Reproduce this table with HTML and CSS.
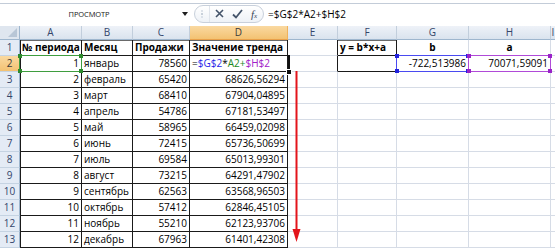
FILE: index.html
```html
<!DOCTYPE html>
<html lang="ru">
<head>
<meta charset="utf-8">
<link rel="stylesheet" href="styles.css">
</head>
<body>
<div class="excel">
  <div class="fbar">
    <div class="namebox"><span class="nb-text">ПРОСМОТР</span><span class="nb-arrow"></span></div>
    <div class="fbtns">
      <span class="fb-grip"><svg width="10" height="12" viewBox="0 0 10 12"><circle cx="5" cy="6" r="1" fill="#b9c3cf"/><circle cx="5" cy="3" r="1" fill="#d3dae3"/><circle cx="5" cy="9" r="1" fill="#d3dae3"/></svg></span>
      <span class="fb-ico"><svg width="9" height="9" viewBox="0 0 9 9"><path d="M1 1 L8 8 M8 1 L1 8" stroke="#44546a" stroke-width="1.6" fill="none"/></svg></span>
      <span class="fb-ico"><svg width="11" height="10" viewBox="0 0 11 10"><path d="M1 5.5 L4 8.5 L10 1" stroke="#44546a" stroke-width="1.8" fill="none"/></svg></span>
      <span class="fb-fx"><i>f</i><span class="fx-x">x</span></span>
    </div>
    <div class="finput">=$G$2*A2+$H$2</div>
  </div>

  <div class="sheet">
    <div class="corner"></div>
    <div class="ch">A</div>
    <div class="ch">B</div>
    <div class="ch">C</div>
    <div class="ch sel">D</div>
    <div class="ch">E</div>
    <div class="ch">F</div>
    <div class="ch">G</div>
    <div class="ch">H</div>
    <div class="ch">I</div>

    <div class="rh">1</div>
    <div class="c t tl tt b">№ периода</div>
    <div class="c t tt b">Месяц</div>
    <div class="c t tt b">Продажи</div>
    <div class="c t tt b">Значение тренда</div>
    <div class="c er"></div>
    <div class="c t tt b">y = b*x+a</div>
    <div class="c b ctr">b</div>
    <div class="c b ctr">a</div>
    <div class="c"></div>

    <div class="rh sel">2</div>
    <div class="c t tl r">1</div>
    <div class="c t">январь</div>
    <div class="c t r">78560</div>
    <div class="c t"><span class="f-k">=</span><span class="f-g">$G$2</span><span class="f-k">*</span><span class="f-a">A2</span><span class="f-a">+</span><span class="f-h">$H$2</span></div>
    <div class="c er"></div>
    <div class="c t"></div>
    <div class="c r">-722,513986</div>
    <div class="c r">70071,59091</div>
    <div class="c"></div>

    <div class="rh">3</div>
    <div class="c t tl r">2</div>
    <div class="c t">февраль</div>
    <div class="c t r">65420</div>
    <div class="c t r">68626,56294</div>
    <div class="c"></div><div class="c"></div><div class="c"></div><div class="c"></div><div class="c"></div>

    <div class="rh">4</div>
    <div class="c t tl r">3</div>
    <div class="c t">март</div>
    <div class="c t r">68410</div>
    <div class="c t r">67904,04895</div>
    <div class="c"></div><div class="c"></div><div class="c"></div><div class="c"></div><div class="c"></div>

    <div class="rh">5</div>
    <div class="c t tl r">4</div>
    <div class="c t">апрель</div>
    <div class="c t r">54786</div>
    <div class="c t r">67181,53497</div>
    <div class="c"></div><div class="c"></div><div class="c"></div><div class="c"></div><div class="c"></div>

    <div class="rh">6</div>
    <div class="c t tl r">5</div>
    <div class="c t">май</div>
    <div class="c t r">58965</div>
    <div class="c t r">66459,02098</div>
    <div class="c"></div><div class="c"></div><div class="c"></div><div class="c"></div><div class="c"></div>

    <div class="rh">7</div>
    <div class="c t tl r">6</div>
    <div class="c t">июнь</div>
    <div class="c t r">72415</div>
    <div class="c t r">65736,50699</div>
    <div class="c"></div><div class="c"></div><div class="c"></div><div class="c"></div><div class="c"></div>

    <div class="rh">8</div>
    <div class="c t tl r">7</div>
    <div class="c t">июль</div>
    <div class="c t r">69584</div>
    <div class="c t r">65013,99301</div>
    <div class="c"></div><div class="c"></div><div class="c"></div><div class="c"></div><div class="c"></div>

    <div class="rh">9</div>
    <div class="c t tl r">8</div>
    <div class="c t">август</div>
    <div class="c t r">73215</div>
    <div class="c t r">64291,47902</div>
    <div class="c"></div><div class="c"></div><div class="c"></div><div class="c"></div><div class="c"></div>

    <div class="rh">10</div>
    <div class="c t tl r">9</div>
    <div class="c t">сентябрь</div>
    <div class="c t r">62563</div>
    <div class="c t r">63568,96503</div>
    <div class="c"></div><div class="c"></div><div class="c"></div><div class="c"></div><div class="c"></div>

    <div class="rh">11</div>
    <div class="c t tl r">10</div>
    <div class="c t">октябрь</div>
    <div class="c t r">57412</div>
    <div class="c t r">62846,45105</div>
    <div class="c"></div><div class="c"></div><div class="c"></div><div class="c"></div><div class="c"></div>

    <div class="rh">12</div>
    <div class="c t tl r">11</div>
    <div class="c t">ноябрь</div>
    <div class="c t r">55210</div>
    <div class="c t r">62123,93706</div>
    <div class="c"></div><div class="c"></div><div class="c"></div><div class="c"></div><div class="c"></div>

    <div class="rh">13</div>
    <div class="c t tl r">12</div>
    <div class="c t">декабрь</div>
    <div class="c t r">67963</div>
    <div class="c t r">61401,42308</div>
    <div class="c"></div><div class="c"></div><div class="c"></div><div class="c"></div><div class="c"></div>

    <div class="ref ref-a2"><i class="h tl1"></i><i class="h tr1"></i><i class="h bl1"></i><i class="h br1"></i></div>
    <div class="ref ref-g2"><i class="h tl1"></i><i class="h tr1"></i><i class="h bl1"></i><i class="h br1"></i></div>
    <div class="ref ref-h2"><i class="h tl1"></i><i class="h tr1"></i><i class="h bl1"></i><i class="h br1"></i></div>
    <div class="active"><i class="fill"></i></div>

    <svg class="arrow" width="9" height="171" viewBox="0 0 9 171">
      <rect x="3.5" y="0" width="2" height="160" fill="#e3141b"/>
      <polygon points="0.5,158 8.5,158 4.5,171" fill="#e3141b"/>
    </svg>
  </div>
</div>
</body>
</html>
```

FILE: styles.css
```css
html, body {
  margin: 0;
  padding: 0;
  background: #ffffff;
}

body {
  width: 555px;
  height: 249px;
  overflow: hidden;
  font-family: "Open Sans", "Liberation Sans", sans-serif;
  font-size: 10px;
  color: #000;
}

.excel {
  width: 555px;
}

/* ---------- formula bar ---------- */
.fbar {
  display: flex;
  align-items: center;
  box-sizing: border-box;
  border-top: 1px solid #c3ccd8;
  margin-top: 3px;
  margin-bottom: 3px;
  height: 20px;
  background: #ffffff;
}

.namebox {
  width: 192px;
  height: 100%;
  display: flex;
  align-items: center;
}

.nb-text {
  width: 178px;
  text-align: center;
  font-size: 7.5px;
  letter-spacing: -0.1px;
  color: #202020;
}

.nb-arrow {
  width: 0;
  height: 0;
  border-left: 3px solid transparent;
  border-right: 3px solid transparent;
  border-top: 4px solid #1e1e1e;
  margin-left: 4px;
  margin-top: 1px;
}

.fbtns {
  width: 70px;
  height: 18px;
  margin-left: 2px;
  box-sizing: border-box;
  border: 1px solid #c8d0db;
  border-radius: 9px;
  background: linear-gradient(#ffffff, #eef2f7);
  display: flex;
  align-items: center;
}

.fb-grip {
  width: 14px;
  height: 16px;
  display: flex;
  align-items: center;
  justify-content: center;
  border-right: 1px solid #e0e5ec;
}

.fb-ico {
  width: 18px;
  display: flex;
  align-items: center;
  justify-content: center;
}

.fb-fx {
  width: 16px;
  font-family: "Liberation Serif", serif;
  font-size: 11px;
  color: #3a4658;
  display: flex;
  align-items: baseline;
  justify-content: center;
}

.fx-x {
  font-size: 7px;
  font-style: italic;
}

.finput {
  flex: 1;
  padding-left: 4px;
  font-size: 10px;
  color: #000;
}

/* ---------- sheet grid ---------- */
.sheet {
  display: grid;
  grid-template-columns: 20px 62px 51px 57px 98px 50px 59px 72px 82px 1fr;
  grid-template-rows: 14px repeat(13, 16px);
  position: relative;
}

.corner {
  box-sizing: border-box;
  background: #dfe6ef;
  border-right: 1px solid #9eb6ce;
  border-bottom: 1px solid #9eb6ce;
  position: relative;
}

.corner::after {
  content: "";
  position: absolute;
  right: 2px;
  bottom: 2px;
  width: 0;
  height: 0;
  border-left: 9px solid transparent;
  border-bottom: 9px solid #b8c6d6;
}

.ch {
  box-sizing: border-box;
  background: linear-gradient(#eef2f8, #dae3ee);
  border-right: 1px solid #c2cedc;
  border-bottom: 1px solid #9eb6ce;
  text-align: center;
  line-height: 13px;
  font-size: 10px;
  color: #34466a;
}

.ch.sel {
  background: linear-gradient(#fad9a1, #f3c272);
  border-right-color: #f0b25c;
  border-bottom-color: #e8a04a;
  color: #3a3a3a;
}

.rh {
  box-sizing: border-box;
  background: #e4ebf5;
  border-right: 1px solid #9eb6ce;
  border-bottom: 1px solid #c5d3e2;
  text-align: center;
  line-height: 15px;
  font-size: 10px;
  color: #34466a;
}

.rh.sel {
  background: linear-gradient(#fad9a1, #f3c272);
  border-right-color: #e8a04a;
  color: #3a3a3a;
}

.c {
  box-sizing: border-box;
  border-right: 1px solid #d6dce6;
  border-bottom: 1px solid #d6dce6;
  padding: 0 2px;
  line-height: 15px;
  white-space: nowrap;
  overflow: hidden;
}

.c.t {
  border-right-color: #1a1a1a;
  border-bottom-color: #1a1a1a;
}

.c.er {
  border-right-color: #1a1a1a;
}

.c.tl {
  box-shadow: inset 1px 0 0 #1a1a1a;
}

.c.tt {
  box-shadow: inset 0 1px 0 #6a6a6a;
}

.c.tl.tt {
  box-shadow: inset 1px 0 0 #1a1a1a, inset 0 1px 0 #6a6a6a;
}

.b {
  font-weight: 700;
}

.r {
  text-align: right;
}

.ctr {
  text-align: center;
}

.f-k { color: #000; }
.f-g { color: #2626e8; }
.f-a { color: #1f8a1f; }
.f-h { color: #a020c8; }

/* ---------- reference highlights (overlay) ---------- */
.ref {
  position: absolute;
  box-sizing: border-box;
  border: 1px solid;
  height: 17px;
  top: 29px;
}

.ref-a2 {
  left: 19px;
  width: 63px;
  border-color: #3f9d3f;
  color: #2e8b2e;
}

.ref-g2 {
  left: 396px;
  width: 73px;
  border-color: #4a4af0;
  color: #2222dd;
}

.ref-h2 {
  left: 468px;
  width: 83px;
  border-color: #b04ad8;
  color: #9a22c8;
}

.h {
  position: absolute;
  width: 4px;
  height: 4px;
  background: currentColor;
}

.tl1 { left: -2px; top: -2px; }
.tr1 { right: -2px; top: -2px; }
.bl1 { left: -2px; bottom: -2px; }
.br1 { right: -2px; bottom: -2px; }

.active {
  position: absolute;
  box-sizing: border-box;
  left: 189px;
  top: 29px;
  width: 101px;
  height: 17px;
  border-right: 2px solid #111;
}

.fill {
  position: absolute;
  right: -4px;
  bottom: -3px;
  width: 4px;
  height: 4px;
  background: #111;
  border: 1px solid #fff;
}

.arrow {
  position: absolute;
  left: 292px;
  top: 45px;
}
```
